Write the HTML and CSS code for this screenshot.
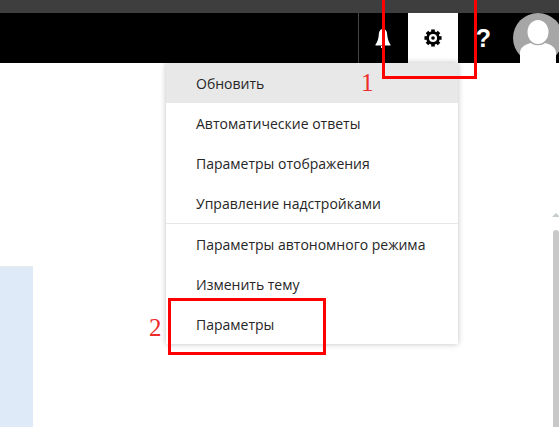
FILE: index.html
```html
<html>
<head>
  <title>Почта</title>
  <link rel="stylesheet" href="styles.css">
</head>
<body>
  <div class="strip"></div>
  <div class="bar">
    <div class="tile tile-first">
      <svg class="bell" width="16" height="19" viewBox="0 0 16 19">
        <path fill="#fff" d="M8 0C5 0 4 2.500 3.800 5.500 3.500 9.500 2.500 13 .5 15.500L.5 16.500H15.500V15.500C13.500 13 12.500 9.500 12.200 5.500 12 2.500 11 0 8 0Z"/>
        <rect x="6" y="17" width="4" height="2" fill="#fff"/>
      </svg>
    </div>
    <div class="tile tile-on">
      <svg width="18" height="18" viewBox="0 0 20 20">
        <circle cx="10" cy="10" r="6" fill="none" stroke="#000" stroke-width="3"/>
        <circle cx="10" cy="10" r="2" fill="#000"/>
        <g fill="#000">
          <rect x="8" y="0.500" width="4" height="4"/>
          <rect x="8" y="15.500" width="4" height="4"/>
          <rect x="0.500" y="8" width="4" height="4"/>
          <rect x="15.500" y="8" width="4" height="4"/>
          <rect x="8" y="0.500" width="4" height="4" transform="rotate(45 10 10)"/>
          <rect x="8" y="15.500" width="4" height="4" transform="rotate(45 10 10)"/>
          <rect x="0.500" y="8" width="4" height="4" transform="rotate(45 10 10)"/>
          <rect x="15.500" y="8" width="4" height="4" transform="rotate(45 10 10)"/>
        </g>
      </svg>
    </div>
    <div class="tile tile-help">?</div>
    <div class="avatar">
      <svg width="50" height="50" viewBox="0 0 50 50">
        <circle cx="25" cy="25" r="25" fill="#a6a6a6"/>
        <ellipse cx="25" cy="19" rx="10.500" ry="12" fill="#fff"/>
        <path fill="#fff" d="M7 50V40C7 34 13 31 18 30 21 33 29 33 32 30 37 31 43 34 43 40V50Z"/>
      </svg>
    </div>
  </div>

  <div class="content">
    <div class="pane"></div>
    <div class="scroll">
      <div class="scroll-up"></div>
      <div class="scroll-thumb"></div>
    </div>

    <div class="menu">
      <div class="item item-on">Обновить</div>
      <div class="item">Автоматические ответы</div>
      <div class="item">Параметры отображения</div>
      <div class="item">Управление надстройками</div>
      <div class="line"></div>
      <div class="item">Параметры автономного режима</div>
      <div class="item">Изменить тему</div>
      <div class="item">Параметры</div>
    </div>
  </div>

  <!-- annotations drawn over the screenshot -->
  <div class="mark mark-gear"></div>
  <div class="mark mark-item"></div>
  <div class="num num-1">1</div>
  <div class="num num-2">2</div>
</body>
</html>
```

FILE: styles.css
```css
html, body {
  height: 100%;
}
body {
  margin: 0;
  padding: 0;
  background: #fff;
  font-family: "Open Sans", "Noto Sans", sans-serif;
  overflow: hidden;
  position: relative;
  display: flex;
  flex-direction: column;
}
.strip {
  height: 13px;
  background: #3e3e3e;
}
.bar {
  height: 50px;
  background: #000;
  display: flex;
  justify-content: flex-end;
}
.tile {
  width: 50px;
  height: 50px;
  display: flex;
  align-items: center;
  justify-content: center;
  color: #fff;
}
.tile-first {
  box-sizing: border-box;
  border-left: 1px solid #444;
}
.bell {
  margin-right: 2px;
}
.tile-on {
  background: #fff;
}
.tile-help {
  font-family: "Liberation Sans", sans-serif;
  font-size: 25px;
  font-weight: bold;
  padding-left: 1px;
  box-sizing: border-box;
}
.avatar {
  flex: none;
  width: 50px;
  height: 50px;
  margin-left: 5px;
  margin-right: -4px;
}
.content {
  flex: 1;
  position: relative;
  display: flex;
  justify-content: space-between;
}
.pane {
  width: 33px;
  margin-top: 203px;
  background: #deeaf7;
  border-top: 1px solid #e8e8e8;
}
.scroll {
  width: 7px;
  padding-top: 150px;
  display: flex;
  flex-direction: column;
  align-items: center;
}
.scroll-up {
  width: 0;
  height: 0;
  border-left: 4px solid transparent;
  border-right: 4px solid transparent;
  border-bottom: 4px solid #c6cccc;
}
.scroll-thumb {
  flex: 1;
  width: 6px;
  margin-top: 13px;
  background: #c8c8c8;
  border-radius: 3px 3px 0 0;
}
.menu {
  position: absolute;
  left: 166px;
  top: 0;
  width: 292px;
  background: #fff;
  box-shadow: 0 0 6px rgba(0, 0, 0, .25);
}
.item {
  height: 40px;
  line-height: 42px;
  padding-left: 30px;
  font-size: 14px;
  color: #262626;
}
.item-on {
  background: #e8e8e8;
}
.line {
  height: 1px;
  background: #e6e6e6;
}
.mark {
  position: absolute;
  box-sizing: border-box;
  border: 3px solid #f00;
}
.mark-gear {
  left: 382px;
  top: -5px;
  width: 95px;
  height: 84px;
}
.mark-item {
  left: 168px;
  top: 298px;
  width: 158px;
  height: 57px;
}
.num {
  position: absolute;
  font-family: "Liberation Serif", serif;
  font-size: 25px;
  line-height: 24px;
  color: #ee2a2a;
}
.num-1 {
  left: 361px;
  top: 71px;
}
.num-2 {
  left: 149px;
  top: 316px;
}
```
